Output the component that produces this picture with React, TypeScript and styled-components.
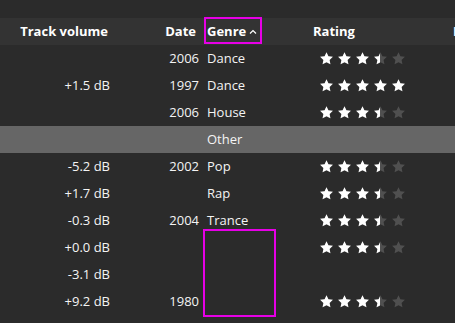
import { FC } from "react";
import styled, { createGlobalStyle } from "styled-components";

interface ITrack {
  volume?: string;
  date?: string;
  genre?: string;
  rating?: number;
}

interface IGroup {
  label: string;
  tracks: ITrack[];
}

const ungrouped: ITrack[] = [
  { date: "2006", genre: "Dance", rating: 3.5 },
  { volume: "+1.5 dB", date: "1997", genre: "Dance", rating: 5 },
  { date: "2006", genre: "House", rating: 3.5 },
];

const groups: IGroup[] = [
  {
    label: "Other",
    tracks: [
      { volume: "-5.2 dB", date: "2002", genre: "Pop", rating: 3.5 },
      { volume: "+1.7 dB", genre: "Rap", rating: 3.5 },
      { volume: "-0.3 dB", date: "2004", genre: "Trance", rating: 3.5 },
      { volume: "+0.0 dB", rating: 3.5 },
      { volume: "-3.1 dB" },
      { volume: "+9.2 dB", date: "1980", rating: 3.5 },
    ],
  },
];

const STAR =
  "M6 0.2 L7.76 3.97 L11.9 4.48 L8.85 7.33 L9.64 11.42 L6 9.4 L2.36 11.42 L3.15 7.33 L0.1 4.48 L4.24 3.97 Z";

// fill: 0..1, how much of the star is lit from the left
const Star: FC<{ fill: number; id: string }> = ({ fill, id }) => (
  <svg width="13" height="13" viewBox="0 0 12 12">
    <defs>
      <clipPath id={id}>
        <rect x="0" y="0" width={12 * fill} height="12" />
      </clipPath>
    </defs>
    <path d={STAR} fill="#505050" />
    {fill > 0 && <path d={STAR} fill="#ffffff" clipPath={`url(#${id})`} />}
  </svg>
);

const Rating: FC<{ value: number; rowKey: string }> = ({ value, rowKey }) => (
  <Stars>
    {[0, 1, 2, 3, 4].map((i) => {
      const part = Math.max(0, Math.min(1, value - i));
      return <Star key={i} id={`star-${rowKey}-${i}`} fill={part === 0.5 ? 0.47 : part} />;
    })}
  </Stars>
);

const TrackRow: FC<{ track: ITrack; rowKey: string }> = ({ track, rowKey }) => (
  <Row>
    <Cell $align="right" $pad="0 6px 0 0">{track.volume}</Cell>
    <Cell $align="right" $pad="0 2px 0 0">{track.date}</Cell>
    <Cell $pad="0 0 0 6px">{track.genre}</Cell>
    <Cell $pad="0 0 0 13px">
      {track.rating !== undefined && <Rating value={track.rating} rowKey={rowKey} />}
    </Cell>
    <Cell />
  </Row>
);

const App: FC = () => {
  return (
    <>
      <GlobalStyle />
      <Page>
        <Table>
          <Header>
            <Cell $align="right" $pad="0 8px 0 0">Track volume</Cell>
            <Cell $align="right" $pad="0 5px 0 0">Date</Cell>
            <Cell $pad="0 0 0 6px">
              Genre
              <Caret width="8" height="6" viewBox="0 0 8 6">
                <polyline points="1,4.5 4,1.5 7,4.5" fill="none" stroke="#ffffff" strokeWidth="1.2" />
              </Caret>
            </Cell>
            <Cell $pad="0 0 0 6px">Rating</Cell>
            <Cell $pad="0 0 0 6px">BPM</Cell>
          </Header>
          {ungrouped.map((t, i) => (
            <TrackRow key={`u${i}`} track={t} rowKey={`u${i}`} />
          ))}
          {groups.map((g, gi) => (
            <div key={g.label}>
              <GroupRow>
                <Cell />
                <Cell />
                <Cell $pad="0 0 0 6px">{g.label}</Cell>
              </GroupRow>
              {g.tracks.map((t, i) => (
                <TrackRow key={`g${gi}-${i}`} track={t} rowKey={`g${gi}-${i}`} />
              ))}
            </div>
          ))}
        </Table>
        <Marker style={{ left: 204, top: 17, width: 58, height: 27 }} />
        <Marker style={{ left: 203, top: 229, width: 73, height: 88 }} />
      </Page>
    </>
  );
};

const GlobalStyle = createGlobalStyle`
  html, body {
    margin: 0;
    padding: 0;
    background: #2b2b2b;
  }

  body {
    font-family: "Open Sans", "Noto Sans", sans-serif;
    font-size: 13px;
    color: #f4f4f4;
  }
`;

const Page = styled.div`
  position: relative;
  width: 455px;
  height: 323px;
  overflow: hidden;
  background: #2b2b2b;
`;

const Table = styled.div`
  padding-top: 18px;
  width: 520px;
`;

const columns = "116px 85px 106px 140px 1fr";

const Row = styled.div`
  display: grid;
  grid-template-columns: ${columns};
  height: 27px;
  align-items: center;
`;

const Header = styled(Row)`
  background: #333333;
  font-weight: 700;
  color: #ffffff;
`;

const GroupRow = styled(Row)`
  background: #666666;
`;

const Cell = styled.div<{ $align?: "left" | "right"; $pad?: string }>`
  display: flex;
  align-items: center;
  justify-content: ${(p) => (p.$align === "right" ? "flex-end" : "flex-start")};
  padding: ${(p) => p.$pad ?? "0"};
  white-space: nowrap;
  line-height: 27px;
  height: 27px;
`;

const Caret = styled.svg`
  margin-left: 3px;
  margin-top: 1px;
`;

const Stars = styled.div`
  display: flex;
  gap: 5px;
  align-items: center;
`;

const Marker = styled.div`
  position: absolute;
  box-sizing: border-box;
  border: 2px solid #e600e6;
  pointer-events: none;
`;

export default App;
